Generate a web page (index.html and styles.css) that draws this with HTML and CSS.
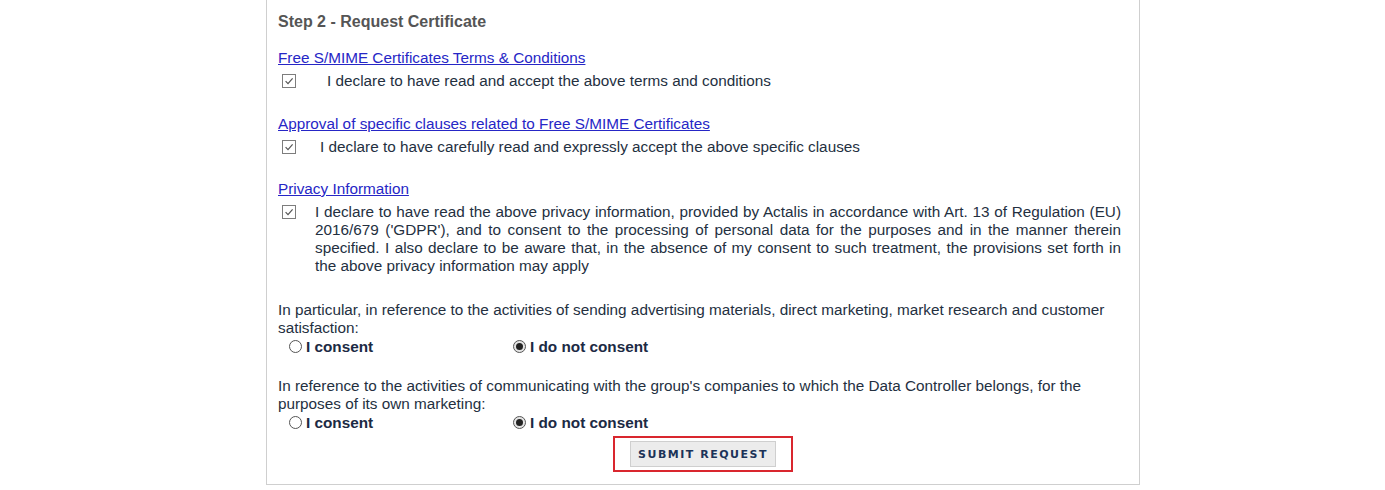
FILE: index.html
```html
<!DOCTYPE html>
<html>
<head>
<meta charset="utf-8">
<link rel="stylesheet" href="styles.css">
</head>
<body>
<div class="page">
  <div class="panel">
    <h3 class="title">Step 2 - Request Certificate</h3>

    <div class="section first">
      <a class="link" href="#">Free S/MIME Certificates Terms &amp; Conditions</a>
      <div class="check-row">
        <span class="cb"><svg viewBox="0 0 12 12" width="12" height="12"><path d="M2.6 6.2 L5 8.6 L9.6 3.4" fill="none" stroke="#555" stroke-width="1.2"/></svg></span>
        <span class="check-text t1">I declare to have read and accept the above terms and conditions</span>
      </div>
    </div>

    <div class="section s2">
      <a class="link" href="#">Approval of specific clauses related to Free S/MIME Certificates</a>
      <div class="check-row">
        <span class="cb"><svg viewBox="0 0 12 12" width="12" height="12"><path d="M2.6 6.2 L5 8.6 L9.6 3.4" fill="none" stroke="#555" stroke-width="1.2"/></svg></span>
        <span class="check-text t2">I declare to have carefully read and expressly accept the above specific clauses</span>
      </div>
    </div>

    <div class="section s3">
      <a class="link" href="#">Privacy Information</a>
      <div class="check-row">
        <span class="cb"><svg viewBox="0 0 12 12" width="12" height="12"><path d="M2.6 6.2 L5 8.6 L9.6 3.4" fill="none" stroke="#555" stroke-width="1.2"/></svg></span>
        <span class="check-text t3 justify">I declare to have read the above privacy information, provided by Actalis in accordance with Art. 13 of Regulation (EU) 2016/679 ('GDPR'), and to consent to the processing of personal data for the purposes and in the manner therein specified. I also declare to be aware that, in the absence of my consent to such treatment, the provisions set forth in the above privacy information may apply</span>
      </div>
    </div>

    <p class="para p1">In particular, in reference to the activities of sending advertising materials, direct marketing, market research and customer satisfaction:</p>
    <div class="radios">
      <label class="radio"><span class="rd"></span>I consent</label>
      <label class="radio"><span class="rd on"></span>I do not consent</label>
    </div>

    <p class="para p2">In reference to the activities of communicating with the group's companies to which the Data Controller belongs, for the purposes of its own marketing:</p>
    <div class="radios">
      <label class="radio"><span class="rd"></span>I consent</label>
      <label class="radio"><span class="rd on"></span>I do not consent</label>
    </div>

    <div class="actions">
      <div class="highlight">
        <button class="submit" type="button">SUBMIT REQUEST</button>
      </div>
    </div>
  </div>
</div>
</body>
</html>
```

FILE: styles.css
```css
html, body {
  margin: 0;
  padding: 0;
  background: #fff;
}

body {
  font-family: "Liberation Sans", Arial, sans-serif;
  font-size: 15.3px;
  color: #24303f;
}

.page {
  padding-left: 266px;
}

.panel {
  border: 1px solid #cfcfcf;
  border-top: none;
  padding: 12px 11px 12px 11px;
  box-sizing: content-box;
  width: 850px;
}

.title {
  margin: 0;
  font-size: 16px;
  line-height: 20px;
  font-weight: bold;
  color: #555;
}

.section.first {
  margin-top: 17px;
}

.section.s2 {
  margin-top: 25px;
}

.section.s3 {
  margin-top: 24px;
}

.link {
  display: block;
  width: max-content;
  line-height: 18px;
  color: #2626c6;
  text-decoration: underline;
}

.check-row {
  display: flex;
  align-items: flex-start;
  margin-top: 5px;
  line-height: 18px;
}

.cb {
  flex: none;
  width: 14px;
  height: 14px;
  margin: 2px 0 0 4px;
  border: 1px solid #7d7d7d;
  box-sizing: border-box;
  display: flex;
  align-items: center;
  justify-content: center;
  background: #fff;
}

.cb svg {
  display: block;
  width: 12px;
  height: 12px;
}

.check-text.t1 { margin-left: 31px; }
.check-text.t2 { margin-left: 24px; }
.check-text.t3 { margin-left: 19px; width: 806px; }

.justify {
  text-align: justify;
}

.para {
  margin: 0;
  line-height: 18px;
}

.para.p1 { margin-top: 26px; }
.para.p2 { margin-top: 21px; }

.radios {
  display: grid;
  grid-template-columns: 224px auto;
  padding-left: 11px;
  line-height: 19px;
}

.radio {
  display: flex;
  align-items: center;
  font-weight: bold;
  color: #1c2a44;
}

.rd {
  width: 13px;
  height: 13px;
  border: 1px solid #555;
  border-radius: 50%;
  box-sizing: border-box;
  margin-right: 4px;
  background: #fff;
  position: relative;
}

.rd.on {
  background: #e4e4e4;
}

.rd.on::after {
  content: "";
  position: absolute;
  left: 2px;
  top: 2px;
  width: 7px;
  height: 7px;
  border-radius: 50%;
  background: #222;
}

.actions {
  display: flex;
  justify-content: center;
  margin-top: 4px;
}

.highlight {
  border: 2px solid #d9262e;
  padding: 3px 15px 3px 15px;
}

.submit {
  display: block;
  width: 146px;
  height: 26px;
  padding: 0;
  border: 1px solid #cfcfcf;
  background: #ececec;
  font-family: "DejaVu Sans", Verdana, sans-serif;
  font-size: 11px;
  font-weight: bold;
  letter-spacing: 1.5px;
  color: #1c3358;
}
```
